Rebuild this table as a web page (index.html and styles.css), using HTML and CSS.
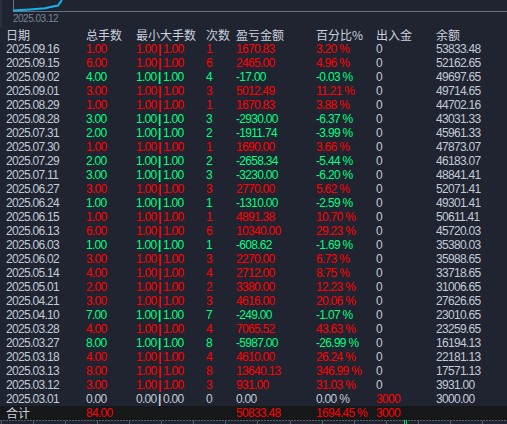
FILE: index.html
```html
<!DOCTYPE html>
<html lang="zh">
<head>
<meta charset="utf-8">
<title>报表</title>
<link rel="stylesheet" href="styles.css">
</head>
<body>
<div class="chart">
  <svg width="507" height="28" viewBox="0 0 507 28">
    <rect x="0" y="0" width="2" height="28" fill="#2a3040"/>
    <line x1="13.5" y1="0" x2="13.5" y2="11" stroke="#6a717c" stroke-width="1"/>
    <line x1="13" y1="11.5" x2="507" y2="11.5" stroke="#6a717c" stroke-width="1"/>
    <polyline points="13,10.5 30,9.5 45,8.3 53,6.5 58,5.5 62,0" fill="none" stroke="#14b4f0" stroke-width="2"/>
    <text x="13" y="21.5" class="axis">2025.03.12</text>
  </svg>
</div>
<div class="table">
  <div class="row head"><span>日期</span><span>总手数</span><span>最小大手数</span><span>次数</span><span>盈亏金额</span><span>百分比%</span><span>出入金</span><span>余额</span></div>
  <div class="row r"><span class="n">2025.09.16</span><span>1.00</span><span>1.00<b>|</b>1.00</span><span>1</span><span>1670.83</span><span>3.20 %</span><span class="n">0</span><span class="n">53833.48</span></div>
  <div class="row r"><span class="n">2025.09.15</span><span>6.00</span><span>1.00<b>|</b>1.00</span><span>6</span><span>2465.00</span><span>4.96 %</span><span class="n">0</span><span class="n">52162.65</span></div>
  <div class="row g"><span class="n">2025.09.02</span><span>4.00</span><span>1.00<b>|</b>1.00</span><span>4</span><span>-17.00</span><span>-0.03 %</span><span class="n">0</span><span class="n">49697.65</span></div>
  <div class="row r"><span class="n">2025.09.01</span><span>3.00</span><span>1.00<b>|</b>1.00</span><span>3</span><span>5012.49</span><span>11.21 %</span><span class="n">0</span><span class="n">49714.65</span></div>
  <div class="row r"><span class="n">2025.08.29</span><span>1.00</span><span>1.00<b>|</b>1.00</span><span>1</span><span>1670.83</span><span>3.88 %</span><span class="n">0</span><span class="n">44702.16</span></div>
  <div class="row g"><span class="n">2025.08.28</span><span>3.00</span><span>1.00<b>|</b>1.00</span><span>3</span><span>-2930.00</span><span>-6.37 %</span><span class="n">0</span><span class="n">43031.33</span></div>
  <div class="row g"><span class="n">2025.07.31</span><span>2.00</span><span>1.00<b>|</b>1.00</span><span>2</span><span>-1911.74</span><span>-3.99 %</span><span class="n">0</span><span class="n">45961.33</span></div>
  <div class="row r"><span class="n">2025.07.30</span><span>1.00</span><span>1.00<b>|</b>1.00</span><span>1</span><span>1690.00</span><span>3.66 %</span><span class="n">0</span><span class="n">47873.07</span></div>
  <div class="row g"><span class="n">2025.07.29</span><span>2.00</span><span>1.00<b>|</b>1.00</span><span>2</span><span>-2658.34</span><span>-5.44 %</span><span class="n">0</span><span class="n">46183.07</span></div>
  <div class="row g"><span class="n">2025.07.11</span><span>3.00</span><span>1.00<b>|</b>1.00</span><span>3</span><span>-3230.00</span><span>-6.20 %</span><span class="n">0</span><span class="n">48841.41</span></div>
  <div class="row r"><span class="n">2025.06.27</span><span>3.00</span><span>1.00<b>|</b>1.00</span><span>3</span><span>2770.00</span><span>5.62 %</span><span class="n">0</span><span class="n">52071.41</span></div>
  <div class="row g"><span class="n">2025.06.24</span><span>1.00</span><span>1.00<b>|</b>1.00</span><span>1</span><span>-1310.00</span><span>-2.59 %</span><span class="n">0</span><span class="n">49301.41</span></div>
  <div class="row r"><span class="n">2025.06.15</span><span>1.00</span><span>1.00<b>|</b>1.00</span><span>1</span><span>4891.38</span><span>10.70 %</span><span class="n">0</span><span class="n">50611.41</span></div>
  <div class="row r"><span class="n">2025.06.13</span><span>6.00</span><span>1.00<b>|</b>1.00</span><span>6</span><span>10340.00</span><span>29.23 %</span><span class="n">0</span><span class="n">45720.03</span></div>
  <div class="row g"><span class="n">2025.06.03</span><span>1.00</span><span>1.00<b>|</b>1.00</span><span>1</span><span>-608.62</span><span>-1.69 %</span><span class="n">0</span><span class="n">35380.03</span></div>
  <div class="row r"><span class="n">2025.06.02</span><span>3.00</span><span>1.00<b>|</b>1.00</span><span>3</span><span>2270.00</span><span>6.73 %</span><span class="n">0</span><span class="n">35988.65</span></div>
  <div class="row r"><span class="n">2025.05.14</span><span>4.00</span><span>1.00<b>|</b>1.00</span><span>4</span><span>2712.00</span><span>8.75 %</span><span class="n">0</span><span class="n">33718.65</span></div>
  <div class="row r"><span class="n">2025.05.01</span><span>2.00</span><span>1.00<b>|</b>1.00</span><span>2</span><span>3380.00</span><span>12.23 %</span><span class="n">0</span><span class="n">31006.65</span></div>
  <div class="row r"><span class="n">2025.04.21</span><span>3.00</span><span>1.00<b>|</b>1.00</span><span>3</span><span>4616.00</span><span>20.06 %</span><span class="n">0</span><span class="n">27626.65</span></div>
  <div class="row g"><span class="n">2025.04.10</span><span>7.00</span><span>1.00<b>|</b>1.00</span><span>7</span><span>-249.00</span><span>-1.07 %</span><span class="n">0</span><span class="n">23010.65</span></div>
  <div class="row r"><span class="n">2025.03.28</span><span>4.00</span><span>1.00<b>|</b>1.00</span><span>4</span><span>7065.52</span><span>43.63 %</span><span class="n">0</span><span class="n">23259.65</span></div>
  <div class="row g"><span class="n">2025.03.27</span><span>8.00</span><span>1.00<b>|</b>1.00</span><span>8</span><span>-5987.00</span><span>-26.99 %</span><span class="n">0</span><span class="n">16194.13</span></div>
  <div class="row r"><span class="n">2025.03.18</span><span>4.00</span><span>1.00<b>|</b>1.00</span><span>4</span><span>4610.00</span><span>26.24 %</span><span class="n">0</span><span class="n">22181.13</span></div>
  <div class="row r"><span class="n">2025.03.13</span><span>8.00</span><span>1.00<b>|</b>1.00</span><span>8</span><span>13640.13</span><span>346.99 %</span><span class="n">0</span><span class="n">17571.13</span></div>
  <div class="row r"><span class="n">2025.03.12</span><span>3.00</span><span>1.00<b>|</b>1.00</span><span>3</span><span>931.00</span><span>31.03 %</span><span class="n">0</span><span class="n">3931.00</span></div>
  <div class="row n"><span>2025.03.01</span><span>0.00</span><span>0.00<b>|</b>0.00</span><span>0</span><span>0.00</span><span>0.00 %</span><span class="red">3000</span><span>3000.00</span></div>
  <div class="row total"><span class="label">合计</span><span class="red">84.00</span><span></span><span></span><span class="red">50833.48</span><span class="red">1694.45 %</span><span class="red">3000</span><span></span></div>
</div>
<div class="footer">
  <svg width="507" height="4" viewBox="0 0 507 4">
    <line x1="0" y1="0.5" x2="507" y2="0.5" stroke="#58616e" stroke-width="1" stroke-dasharray="2 1"/>
    <g fill="#58616e">
      <rect x="1" y="1" width="1" height="3"/>
      <rect x="33" y="1" width="1" height="3"/>
      <rect x="65" y="1" width="1" height="3"/>
      <rect x="97" y="1" width="1" height="3"/>
      <rect x="129" y="1" width="1" height="3"/>
      <rect x="161" y="1" width="1" height="3"/>
      <rect x="193" y="1" width="1" height="3"/>
      <rect x="225" y="1" width="1" height="3"/>
      <rect x="257" y="1" width="1" height="3"/>
      <rect x="290" y="1" width="1" height="3"/>
      <rect x="322" y="1" width="1" height="3"/>
      <rect x="354" y="1" width="1" height="3"/>
      <rect x="386" y="1" width="1" height="3"/>
      <rect x="418" y="1" width="1" height="3"/>
      <rect x="450" y="1" width="1" height="3"/>
      <rect x="482" y="1" width="1" height="3"/>
    </g>
    <g fill="#00e060">
      <rect x="404" y="0" width="1" height="4"/>
      <rect x="406" y="0" width="1" height="4"/>
    </g>
  </svg>
</div>
</body>
</html>
```
FILE: styles.css
```css
html, body {
  margin: 0;
  padding: 0;
}
body {
  width: 507px;
  height: 424px;
  overflow: hidden;
  background: #1f2430;
  font-family: "Liberation Sans", Arial, "Noto Sans CJK SC", sans-serif;
  font-size: 12px;
}
.chart {
  height: 28px;
}
.chart svg {
  display: block;
}
.axis {
  font-family: "Liberation Sans", Arial, sans-serif;
  font-size: 10px;
  letter-spacing: -0.5px;
  fill: #7b8391;
}
.table {
  display: flex;
  flex-direction: column;
}
.row {
  display: grid;
  grid-template-columns: 80px 50px 70px 30px 80px 60px 60px 1fr;
  padding-left: 6px;
  height: 14px;
  line-height: 14px;
  letter-spacing: -0.7px;
  white-space: nowrap;
}
.row b {
  font-weight: bold;
  margin: 0 1.5px;
  letter-spacing: 0;
}
.head {
  font-family: "Noto Sans CJK SC", sans-serif;
  font-size: 12px;
  letter-spacing: 0;
  color: #c9d1de;
}
.r { color: #ff0000; }
.g { color: #00ff80; }
.n { color: #c3cbd8; }
.red { color: #ff0000; }
.total {
  background: #151719;
}
.total .label {
  font-family: "Noto Sans CJK SC", sans-serif;
  font-size: 12px;
  letter-spacing: 0;
  color: #c9d1de;
}
.footer {
  height: 4px;
}
.footer svg {
  display: block;
}
```
